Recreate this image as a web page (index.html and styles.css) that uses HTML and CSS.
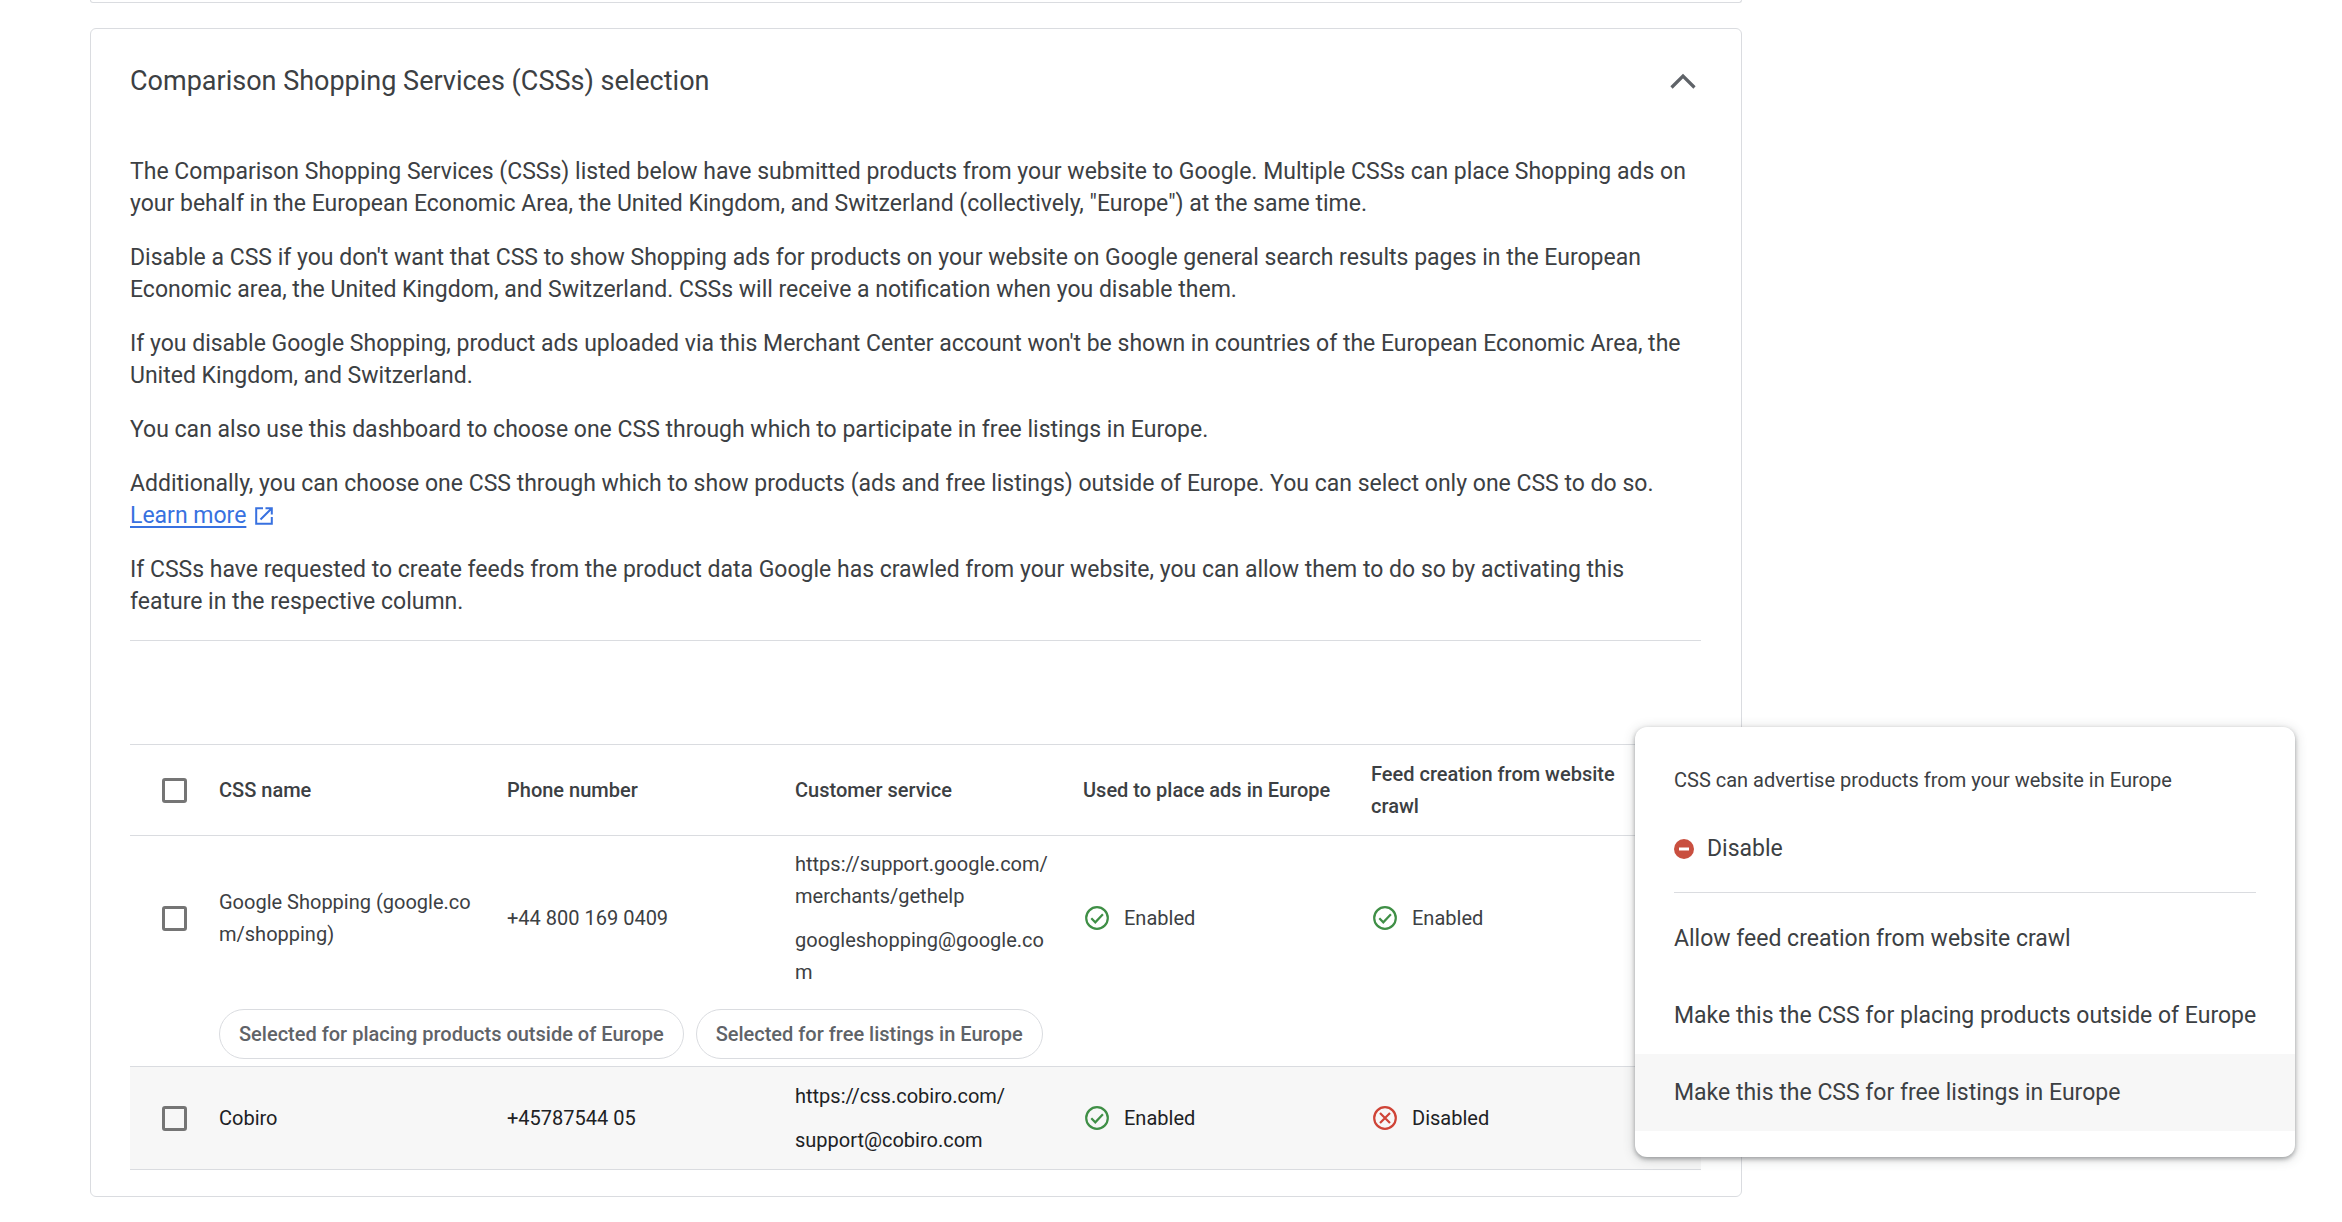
FILE: index.html
```html
<!DOCTYPE html>
<html lang="en">
<head>
<meta charset="utf-8">
<title>Comparison Shopping Services</title>
<link rel="stylesheet" href="styles.css">
</head>
<body>
<svg class="sprite" aria-hidden="true">
  <symbol id="icon-check" viewBox="0 0 24 24">
    <circle cx="12" cy="12" r="10.8" fill="none" stroke="currentColor" stroke-width="2.2"/>
    <path d="M6.3 12.3l4 4 7.6-8" fill="none" stroke="currentColor" stroke-width="2.2"/>
  </symbol>
  <symbol id="icon-cross" viewBox="0 0 24 24">
    <circle cx="12" cy="12" r="10.8" fill="none" stroke="currentColor" stroke-width="2.2"/>
    <path d="M7 7l10 10M17 7L7 17" fill="none" stroke="currentColor" stroke-width="2.2"/>
  </symbol>
</svg>
<main class="page">
  <section class="card card-previous" aria-hidden="true"></section>
  <section class="card">
    <header class="card-header">
      <h2 class="card-title">Comparison Shopping Services (CSSs) selection</h2>
      <button class="collapse" type="button" aria-label="Collapse">
        <svg viewBox="0 0 26 16" width="26" height="16"><path d="M1.5 14.5L13 3l11.5 11.5" fill="none" stroke="currentColor" stroke-width="3.2"/></svg>
      </button>
    </header>
    <div class="intro">
      <p>The Comparison Shopping Services (CSSs) listed below have submitted products from your website to Google. Multiple CSSs can place Shopping ads on your behalf in the European Economic Area, the United Kingdom, and Switzerland (collectively, "Europe") at the same time.</p>
      <p>Disable a CSS if you don't want that CSS to show Shopping ads for products on your website on Google general search results pages in the European Economic area, the United Kingdom, and Switzerland. CSSs will receive a notification when you disable them.</p>
      <p>If you disable Google Shopping, product ads uploaded via this Merchant Center account won't be shown in countries of the European Economic Area, the United Kingdom, and Switzerland.</p>
      <p>You can also use this dashboard to choose one CSS through which to participate in free listings in Europe.</p>
      <p>Additionally, you can choose one CSS through which to show products (ads and free listings) outside of Europe. You can select only one CSS to do so. <a class="learn" href="#"><span class="learn-text">Learn more</span><svg viewBox="0 0 18 18" width="18" height="18"><path d="M8 1.2H1.2v15.6h15.6V10M10.5 1.2h6.3v6.3M16.8 1.2L5.5 12.5" fill="none" stroke="currentColor" stroke-width="2"/></svg></a></p>
      <p>If CSSs have requested to create feeds from the product data Google has crawled from your website, you can allow them to do so by activating this feature in the respective column.</p>
    </div>
    <div class="table-area">
      <table class="services">
        <colgroup><col class="col-check"><col class="col-data"><col class="col-data"><col class="col-data"><col class="col-data"><col class="col-data"><col></colgroup>
        <thead>
          <tr>
            <th class="check"><input type="checkbox" class="box" aria-label="Select all"></th>
            <th>CSS name</th><th>Phone number</th><th>Customer service</th><th>Used to place ads in Europe</th><th>Feed creation from website crawl</th><td></td>
          </tr>
        </thead>
        <tbody>
          <tr>
            <td class="check"><input type="checkbox" class="box" aria-label="Select Google Shopping"></td>
            <td class="name">Google Shopping (google.com/shopping)</td>
            <td>+44 800 169 0409</td>
            <td><div class="contact"><span>https://support.google.com/<wbr>merchants/gethelp</span><span>googleshopping@google.com</span></div></td>
            <td><span class="status"><svg class="enabled"><use href="#icon-check"/></svg>Enabled</span></td>
            <td><span class="status"><svg class="enabled"><use href="#icon-check"/></svg>Enabled</span></td>
            <td></td>
          </tr>
          <tr class="chip-row">
            <td></td>
            <td colspan="6"><div class="chips"><span class="chip">Selected for placing products outside of Europe</span><span class="chip">Selected for free listings in Europe</span></div></td>
          </tr>
          <tr class="hovered">
            <td class="check"><input type="checkbox" class="box" aria-label="Select Cobiro"></td>
            <td class="name">Cobiro</td>
            <td>+45787544 05</td>
            <td><div class="contact"><span>https://css.cobiro.com/</span><span>support@cobiro.com</span></div></td>
            <td><span class="status"><svg class="enabled"><use href="#icon-check"/></svg>Enabled</span></td>
            <td><span class="status"><svg class="disabled"><use href="#icon-cross"/></svg>Disabled</span></td>
            <td></td>
          </tr>
        </tbody>
      </table>
    </div>
    <div class="menu" role="menu">
      <p class="menu-caption">CSS can advertise products from your website in Europe</p>
      <button class="menu-item" type="button" role="menuitem"><svg viewBox="0 0 20 20" width="20" height="20"><circle cx="10" cy="10" r="10" fill="#c94f3f"/><path d="M5 10h10" stroke="#fff" stroke-width="3"/></svg>Disable</button>
      <hr class="menu-divider">
      <button class="menu-item" type="button" role="menuitem">Allow feed creation from website crawl</button>
      <button class="menu-item" type="button" role="menuitem">Make this the CSS for placing products outside of Europe</button>
      <button class="menu-item active" type="button" role="menuitem">Make this the CSS for free listings in Europe</button>
    </div>
  </section>
</main>
</body>
</html>
```
FILE: styles.css
```css
* { box-sizing: border-box; }

body {
  margin: 0;
  background: #fff;
  color: #3c4043;
  font-family: Roboto, "Liberation Sans", sans-serif;
  font-size: 23px;
  line-height: 32px;
}

.sprite { position: absolute; width: 0; height: 0; }

.page {
  max-width: 1742px;
  padding-left: 90px;
}

.card {
  position: relative;
  padding: 0 40px 26px 39px;
  border: 1px solid #dadce0;
  border-radius: 6px;
}

.card-previous {
  height: 3px;
  margin-bottom: 25px;
  padding: 0;
  border-top: 0;
  border-radius: 0 0 6px 6px;
}

.card-header {
  display: flex;
  align-items: center;
  justify-content: space-between;
  padding: 36px 5px 36px 0;
}

.card-title {
  margin: 0;
  font-size: 27px;
  font-weight: 450;
  line-height: 32px;
}

.collapse {
  display: flex;
  padding: 0;
  border: 0;
  background: none;
  color: #5f6368;
}

.intro {
  display: flex;
  flex-direction: column;
  gap: 22px;
  padding: 23px 0 22px;
  border-bottom: 1px solid #dadce0;
}

.intro p { margin: 0; }

.learn {
  display: inline-flex;
  align-items: center;
  gap: 9px;
  color: #3871e0;
  text-decoration: none;
  vertical-align: top;
}

.learn-text {
  text-decoration: underline;
  text-decoration-thickness: 2px;
  text-underline-offset: 3px;
}

.table-area { padding-top: 103px; }

.services {
  width: 100%;
  border-collapse: collapse;
  border-top: 1px solid #dadce0;
  table-layout: fixed;
  font-size: 20px;
}

.col-check { width: 89px; }
.col-data { width: 288px; }

.services th,
.services td {
  padding: 12px 34px 12px 0;
  text-align: left;
  vertical-align: middle;
  overflow-wrap: anywhere;
}

.services th {
  height: 91px;
  font-weight: 500;
}

.services .name { word-break: break-all; }
.services td:last-child { padding-right: 0; }
.services .check { padding: 0 0 0 32px; }
.services tr { border-bottom: 1px solid #dadce0; }
.services tbody tr:first-child { border-bottom: 0; }
.services .chip-row td { padding: 9px 0 7px; }
.services .hovered { background: #f7f7f7; color: #202124; }
.services .hovered td { padding-top: 13px; padding-bottom: 13px; }

.box {
  display: block;
  width: 25px;
  height: 25px;
  margin: 0;
  border: 3px solid #757575;
  border-radius: 3px;
  appearance: none;
}

.contact {
  display: flex;
  flex-direction: column;
  gap: 12px;
}

.status {
  display: flex;
  align-items: center;
  gap: 15px;
  padding-left: 2px;
}

.status svg { width: 24px; height: 24px; }
.enabled { color: #3f8f46; }
.disabled { color: #cf4437; }

.chips { display: flex; gap: 12px; }

.chip {
  padding: 8px 19px;
  border: 1px solid #dadce0;
  border-radius: 25px;
  color: #5f6368;
  font-weight: 500;
  white-space: nowrap;
}

.menu {
  position: absolute;
  left: calc(100% - 106px);
  bottom: 39px;
  padding: 37px 0 26px;
  border-radius: 12px;
  background: #fff;
  box-shadow: 0 2px 4px rgba(60, 64, 67, .4), 0 2px 12px rgba(60, 64, 67, .25);
}

.menu-caption {
  margin: 0 39px 14px;
  font-size: 20px;
}

.menu-item {
  display: flex;
  align-items: center;
  gap: 13px;
  width: 100%;
  height: 77px;
  padding: 0 39px;
  border: 0;
  background: none;
  color: inherit;
  font: inherit;
  white-space: nowrap;
}

.menu-item.active { background: #f7f7f7; }

.menu-divider {
  height: 1px;
  margin: 5px 39px 7px;
  border: 0;
  background: #dadce0;
}
```
